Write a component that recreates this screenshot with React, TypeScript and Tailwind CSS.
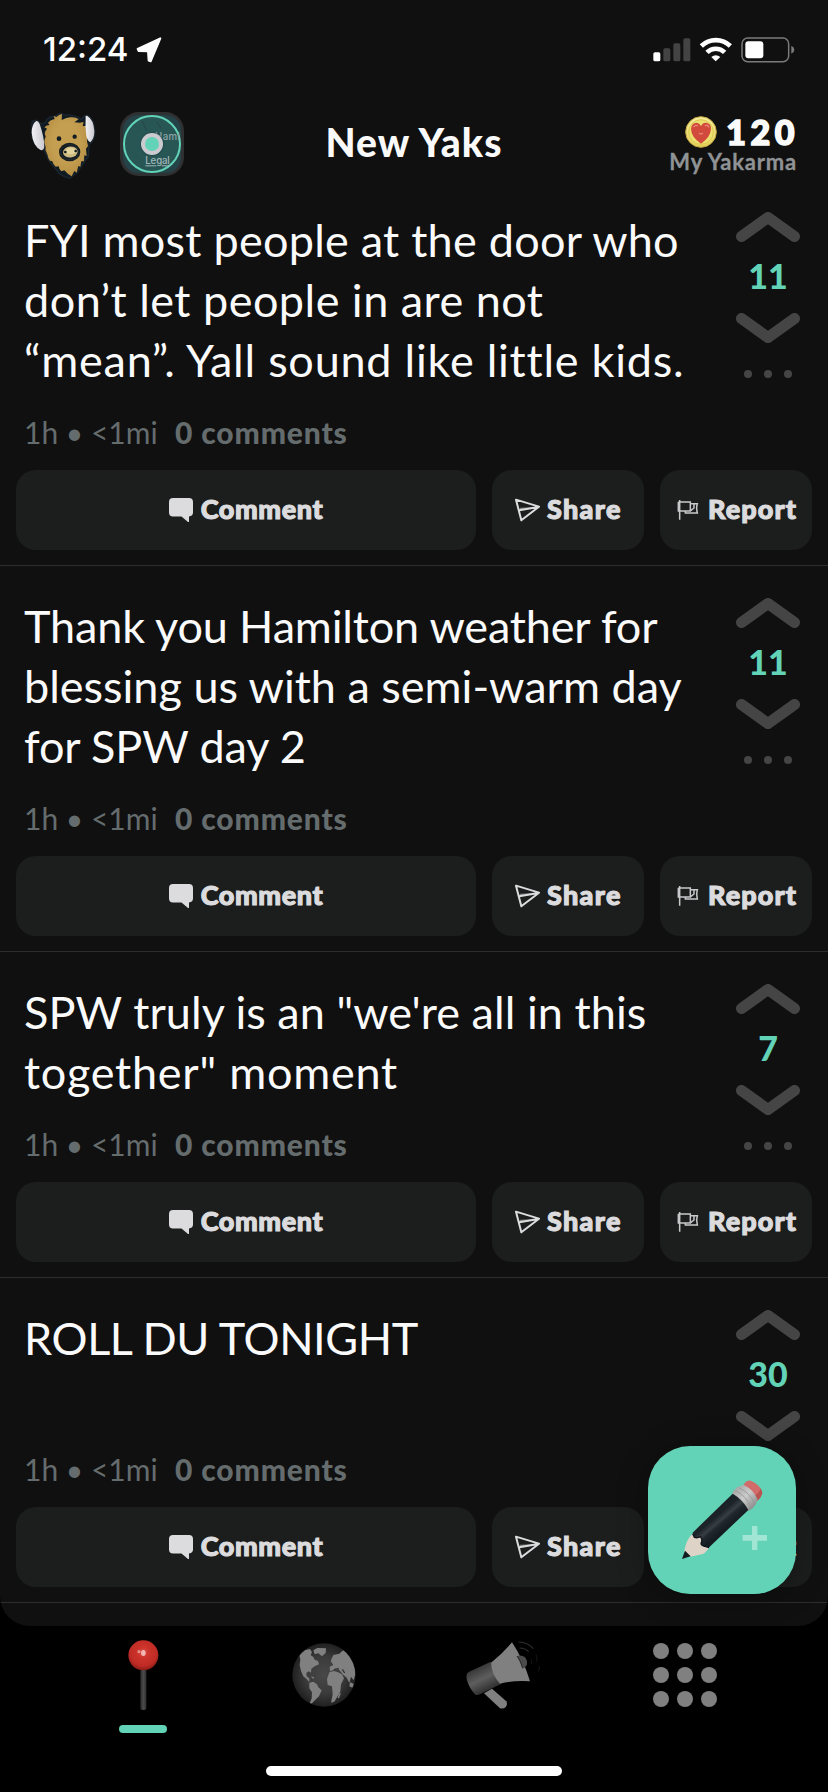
import type { ReactNode } from "react";

type Line = { text: string; tracking: string };
type Post = { lines: Line[]; votes: string };

const posts: Post[] = [
  {
    votes: "11",
    lines: [
      { text: "FYI most people at the door who", tracking: "tracking-[0.24px]" },
      { text: "don’t let people in are not", tracking: "tracking-[0.47px]" },
      { text: "“mean”. Yall sound like little kids.", tracking: "tracking-[0.76px]" },
    ],
  },
  {
    votes: "11",
    lines: [
      { text: "Thank you Hamilton weather for", tracking: "tracking-[-0.16px]" },
      { text: "blessing us with a semi-warm day", tracking: "tracking-[0px]" },
      { text: "for SPW day 2", tracking: "tracking-[-0.12px]" },
    ],
  },
  {
    votes: "7",
    lines: [
      { text: 'SPW truly is an "we\'re all in this', tracking: "tracking-[0.06px]" },
      { text: 'together" moment', tracking: "tracking-[0.75px]" },
    ],
  },
  {
    votes: "30",
    lines: [{ text: "ROLL DU TONIGHT", tracking: "tracking-[-0.38px]" }],
  },
];

function StatusBar() {
  return (
    <div className="flex h-[100px] items-start justify-between pl-[43px] pr-[33px] pt-[29px]">
      <div className="flex items-center gap-[7px]">
        <span className="font-['Inter',sans-serif] text-[33px] font-medium leading-[40px] text-white">12:24</span>
        <svg className="mt-[1px] h-[26px] w-[26px]" viewBox="0 0 78 78">
          <path d="M73 4 L5 36 L8 42 L36 43 L38 71 L44 73 Z" fill="#fff" stroke="#fff" strokeWidth="6" strokeLinejoin="round" />
        </svg>
      </div>
      <svg className="mt-[8px] h-[26px] w-[142px]" viewBox="698 110 426 78">
        <rect x="699" y="156" width="21" height="27" rx="5" fill="#fff" />
        <rect x="729" y="144" width="21" height="39" rx="5" fill="#434343" />
        <rect x="759" y="129" width="21" height="54" rx="5" fill="#434343" />
        <rect x="789" y="114" width="21" height="69" rx="5" fill="#434343" />
        <g fill="none" stroke="#fff" strokeWidth="14">
          <path d="M843 137 A62 62 0 0 1 930 137" />
          <path d="M860 156 A38 38 0 0 1 913 156" />
        </g>
        <path d="M873 170 Q886 159 900 170 L886 183 Z" fill="#fff" />
        <rect x="965" y="113" width="140" height="71" rx="17" fill="none" stroke="#7b7b7b" strokeWidth="4.5" />
        <rect x="975" y="123" width="54" height="51" rx="9" fill="#fff" />
        <path d="M1113 136 Q1122 140 1122 148 Q1122 156 1113 160 Z" fill="#7b7b7b" />
      </svg>
    </div>
  );
}

function YakLogo() {
  return (
    <svg className="h-[68px] w-[66px]" viewBox="89 336 198 204">
      <defs>
        <linearGradient id="horn" x1="0" x2="1">
          <stop offset="0" stopColor="#f2f1f5" />
          <stop offset="1" stopColor="#c9c8ce" />
        </linearGradient>
        <radialGradient id="fur" cx="0.5" cy="0.45" r="0.6">
          <stop offset="0.5" stopColor="#c59f51" />
          <stop offset="1" stopColor="#b48d42" />
        </radialGradient>
      </defs>
      <path d="M95 366 Q108 352 122 372 L136 366 Q140 350 166 348 Q180 334 192 345 Q222 342 243 358 Q253 340 268 350 Q284 368 283 405 Q280 425 266 433 L264 470 L246 494 L232 516 L209 535 Q190 532 178 522 L146 482 L132 452 Q104 444 95 410 Z" fill="#101a22" stroke="#1b2630" strokeWidth="4" strokeLinejoin="round" />
      <path d="M185 342 Q176 343 168 351 L160 348 L163 357 Q148 360 143 369 L148 375 Q139 375 132 382 L140 386 Q131 396 134 404 L136 410 Q129 424 134 434 L136 442 Q133 450 139 458 L142 466 Q142 474 149 482 L156 484 Q158 494 166 500 L175 499 Q176 508 183 514 L192 511 Q201 522 214 529 L222 513 L229 518 L234 498 L240 500 L243 484 L251 484 L252 466 L259 468 L257 446 L263 438 L260 424 L263 402 L256 386 L258 378 L247 378 L250 366 L238 368 L222 367 L235 358 Q226 350 210 352 L198 354 L184 360 Z" fill="url(#fur)" />
      <path d="M108 363 Q94 372 94 398 Q97 437 122 451 Q131 450 132 440 Q132 412 118 372 Q114 362 108 363Z" fill="url(#horn)" />
      <path d="M256 348 Q254 382 258 408 Q262 424 270 427 Q282 416 282 394 Q280 358 260 347Z" fill="url(#horn)" />
      <circle cx="176" cy="416" r="7" fill="#131d22" />
      <circle cx="223" cy="410" r="6.5" fill="#131d22" />
      <ellipse cx="208" cy="456" rx="32" ry="28" fill="#131b20" />
      <ellipse cx="208" cy="456" rx="27" ry="23" fill="none" stroke="#28323a" strokeWidth="2" />
      <ellipse cx="210" cy="456" rx="22" ry="16.5" fill="#cdbb82" transform="rotate(-7 210 456)" />
      <ellipse cx="211" cy="453" rx="15" ry="10" fill="#e2d39c" />
      <circle cx="195" cy="456" r="4" fill="#131b20" />
      <circle cx="226" cy="453" r="4" fill="#131b20" />
    </svg>
  );
}

function MapBadge() {
  return (
    <svg className="h-[64px] w-[64px]" viewBox="360 336 192 192">
      <rect x="360" y="336" width="192" height="192" rx="56" fill="#2f3031" />
      <rect x="369" y="345" width="174" height="174" rx="47" fill="#244349" />
      <circle cx="456" cy="432" r="84" fill="#285655" stroke="#62d3b6" strokeWidth="6" />
      <path d="M426 362 L440 392 M470 366 L484 386" stroke="#27454c" strokeWidth="3" />
      <text x="465" y="421" fill="#8fa6a8" fontSize="29" fontFamily="Inter, sans-serif" fontWeight="500" textLength="75">Hami</text>
      <circle cx="456" cy="432" r="37" fill="#1f4548" opacity="0.5" />
      <circle cx="456" cy="432" r="33" fill="#cacad0" />
      <circle cx="456" cy="432" r="21" fill="#62d3b6" />
      <text x="436" y="493" fill="#a3b8b9" fontSize="29" fontFamily="Inter, sans-serif" fontWeight="500" textLength="73" textDecoration="underline">Legal</text>
    </svg>
  );
}

function HeartCoin() {
  return (
    <svg className="h-[32px] w-[32px]" viewBox="0 0 96 96">
      <defs>
        <linearGradient id="coin" x1="0" y1="0" x2="0" y2="1">
          <stop offset="0" stopColor="#f6eea0" />
          <stop offset="1" stopColor="#e3cf57" />
        </linearGradient>
      </defs>
      <circle cx="48" cy="48" r="46" fill="url(#coin)" stroke="#c3a640" strokeWidth="3" />
      <circle cx="48" cy="48" r="37" fill="#ebe070" stroke="#dac84f" strokeWidth="3" />
      <path d="M48 83 Q18 62 18 38 Q20 20 35 20 Q44 21 48 30 Q53 19 64 20 Q78 22 78 38 Q77 62 48 83Z" fill="#d14a3c" />
      <path d="M27 32 Q31 26 37 29 M61 29 Q68 25 71 33 M43 52 Q48 56 53 52" stroke="#eb8779" strokeWidth="4" strokeLinecap="round" fill="none" />
    </svg>
  );
}

function Header() {
  return (
    <header className="grid h-[80px] grid-cols-[1fr_auto_1fr] items-start pl-[30px] pr-[32px]">
      <div className="flex gap-[24px] pt-[12px]">
        <YakLogo />
        <MapBadge />
      </div>
      <h1 className="ml-[2px] pt-[18px] text-[39px] font-black leading-[48px] tracking-[1.1px] text-[#fafafa]">New Yaks</h1>
      <div className="flex flex-col items-end pt-[16px]">
        <div className="flex items-center gap-[9px]">
          <HeartCoin />
          <span className="mr-[-3px] text-[34px] font-black leading-[30px] tracking-[4.5px] text-[#fafafa] [-webkit-text-stroke:1.6px_#fafafa]">120</span>
        </div>
        <span className="mr-[-1px] mt-[1px] text-[22px] font-bold leading-[25px] tracking-[0.8px] text-[#8f9395] [-webkit-text-stroke:0.3px_#8f9395]">My Yakarma</span>
      </div>
    </header>
  );
}

function Chevron({ down = false }: { down?: boolean }) {
  return (
    <svg className="h-[30px] w-[64px]" viewBox="0 0 64 30">
      <path d={down ? "M5.5 5.5 L32 24.5 L58.5 5.5" : "M5.5 24.5 L32 5.5 L58.5 24.5"} fill="none" stroke="#454545" strokeWidth="11" strokeLinecap="round" strokeLinejoin="round" />
    </svg>
  );
}

function Votes({ value }: { value: string }) {
  return (
    <div className="flex w-[64px] flex-col items-center">
      <Chevron />
      <span className="mt-[14px] h-[42px] text-[34px] font-black leading-[40px] text-[#62d3b6]">{value}</span>
      <div className="mt-[15px] flex">
        <Chevron down />
      </div>
      <div className="mt-[27px] flex gap-[12px]">
        <i className="h-2 w-2 rounded-full bg-[#454545]" />
        <i className="h-2 w-2 rounded-full bg-[#454545]" />
        <i className="h-2 w-2 rounded-full bg-[#454545]" />
      </div>
    </div>
  );
}

function Action({ icon, label, className }: { icon: ReactNode; label: string; className: string }) {
  return (
    <button className={`flex h-[80px] items-center rounded-[20px] bg-[#1c1e1d] text-[27px] font-black leading-[40px] text-[#dcdcde] [-webkit-text-stroke:1.1px_#dcdcde] ${className}`}>
      {icon}
      <span className="pb-[2px]">{label}</span>
    </button>
  );
}

const commentIcon = (
  <svg className="mr-[8px] h-[24px] w-[24px]" viewBox="0 0 24 24">
    <path d="M4 0H20Q24 0 24 4V14.5Q24 18 20 18.5V24H19L12.5 18.5H4Q0 18.5 0 14.5V4Q0 0 4 0Z" fill="#dcdcde" />
  </svg>
);
const shareIcon = (
  <svg className="mr-[7px] h-[24px] w-[25px]" viewBox="0 0 75 72">
    <path d="M3 5 L72 26 L19 67 Z M13 37 L70 27" fill="none" stroke="#dcdcde" strokeWidth="6" strokeLinejoin="round" />
    <path d="M13 37 L70 27 L15 29 Z" fill="#dcdcde" opacity="0.5" />
  </svg>
);
const reportIcon = (
  <svg className="mr-[9px] h-[22px] w-[22px]" viewBox="0 0 66 66">
    <path d="M8 3 V62 M4 9 H40 V36 H4 V9 M40 14 H61 Q57 26 61 42 H25 V37 M40 36 L51 27 V16" fill="none" stroke="#c9c9cb" strokeWidth="4.5" />
  </svg>
);

function PostCard({ post }: { post: Post }) {
  return (
    <article className="border-b border-[#2d2d2e]">
      <div className="flex min-h-[165px] items-start justify-between pl-[24px] pr-[28px] pt-[30px]">
        <p className="pb-[16px] text-[45px] leading-[60px] text-[#fafafa]">
          {post.lines.map((l) => (
            <span key={l.text} className={`block whitespace-nowrap ${l.tracking}`}>{l.text}</span>
          ))}
        </p>
        <div className="mt-[2px] h-[100px]">
          <Votes value={post.votes} />
        </div>
      </div>
      <div className="flex h-[52px] items-center pl-[24px] text-[30px] leading-[40px] text-[#656c6d]">
        <span className="w-[151px] whitespace-pre">1h • &lt;1mi</span>
        <span className="font-black tracking-[0.85px]">0 comments</span>
      </div>
      <div className="mt-[12px] flex gap-4 px-4 pb-[15px]">
        <Action icon={commentIcon} label="Comment" className="w-[460px] justify-center tracking-[0.6px]" />
        <Action icon={shareIcon} label="Share" className="w-[152px] pl-[23px] tracking-[1.3px]" />
        <Action icon={reportIcon} label="Report" className="w-[152px] pl-[17px] tracking-[1.1px]" />
      </div>
    </article>
  );
}

function ComposeButton() {
  return (
    <button className="absolute left-[648px] top-[1446px] h-[148px] w-[148px] overflow-hidden rounded-[42px] bg-[#62d3b6] shadow-[0_4px_28px_6px_rgba(0,0,0,0.2)]">
      <svg className="h-full w-full" viewBox="54 48 444 444">
        <defs>
          <linearGradient id="barrel" gradientUnits="userSpaceOnUse" x1="247" y1="250" x2="288" y2="298">
            <stop offset="0" stopColor="#1a2127" />
            <stop offset="0.25" stopColor="#1c242a" />
            <stop offset="0.5" stopColor="#383f43" />
            <stop offset="0.65" stopColor="#20282d" />
            <stop offset="1" stopColor="#151c21" />
          </linearGradient>
          <linearGradient id="ferrule" gradientUnits="userSpaceOnUse" x1="315" y1="178" x2="370" y2="230">
            <stop offset="0" stopColor="#a9a9aa" />
            <stop offset="0.5" stopColor="#cbcbcc" />
            <stop offset="1" stopColor="#919192" />
          </linearGradient>
        </defs>
        <path d="M340 165 Q350 150 362 152 Q390 163 397 188 Q394 203 383 212 Z" fill="#d26c6b" />
        <path d="M383 212 L374 196 Q390 190 391 174 Q397 184 397 190 Q394 203 383 212" fill="#b9534f" />
        <path d="M306 190 Q320 166 342 165 Q372 180 383 209 Q374 235 355 243 Z" fill="url(#ferrule)" />
        <path d="M316 182 Q350 198 364 234 M326 173 Q360 188 374 221" stroke="#979798" strokeWidth="2.5" fill="none" />
        <path d="M308 191 L188 308 L193 330 L214 350 L236 353 L355 240 Q338 208 308 191Z" fill="url(#barrel)" />
        <path d="M188 311 L193 322 Q202 325 212 320 L216 330 L213 342 Q217 350 225 349 L237 353 Q226 370 216 373 L181 380 L163 364 Q168 328 188 311Z" fill="#ddd4c7" />
        <path d="M188 311 L193 322 Q202 325 212 320 L216 330 L213 342 Q217 350 225 349 L237 353" fill="none" stroke="#0f151a" strokeWidth="4" />
        <path d="M165 362 L156 387 L182 379 Z" fill="#131a20" />
        <path d="M366 288h16v27h29v17h-29v28h-16v-28h-28v-17h28z" fill="#a1e6d4" />
      </svg>
    </button>
  );
}

function TabBar() {
  return (
    <nav className="flex h-[166px] flex-col items-center bg-black">
      <div className="grid h-[140px] w-full grid-cols-4 justify-items-center px-[53px] pt-[13px]">
        <div className="flex flex-col items-center">
          <svg className="h-[72px] w-[34px]" viewBox="380 117 102 216">
            <defs>
              <radialGradient id="pin" cx="0.5" cy="0.4" r="0.6">
                <stop offset="0" stopColor="#df514b" />
                <stop offset="0.3" stopColor="#cc332b" />
                <stop offset="0.75" stopColor="#bf2c25" />
                <stop offset="1" stopColor="#8b1b17" />
              </radialGradient>
              <linearGradient id="stem" x1="0" x2="1">
                <stop offset="0" stopColor="#292929" />
                <stop offset="0.5" stopColor="#4b4b4b" />
                <stop offset="1" stopColor="#303030" />
              </linearGradient>
            </defs>
            <rect x="423" y="200" width="18" height="130" rx="6" fill="url(#stem)" />
            <circle cx="432" cy="166" r="45" fill="url(#pin)" />
            <ellipse cx="432" cy="159" rx="7" ry="9" fill="#f2b6b3" />
            <circle cx="419" cy="155" r="5" fill="#e58e89" />
          </svg>
          <i className="mt-[14px] h-[8px] w-[48px] rounded-full bg-[#62d3b6]" />
        </div>
        <svg className="mt-[4px] h-[64px] w-[64px]" viewBox="876 128 192 192">
          <defs>
            <radialGradient id="ocean">
              <stop offset="0" stopColor="#484848" />
              <stop offset="0.6" stopColor="#3a3a3a" />
              <stop offset="1" stopColor="#202020" />
            </radialGradient>
            <clipPath id="sphere"><circle cx="972" cy="224" r="94" /></clipPath>
          </defs>
          <circle cx="972" cy="224" r="95" fill="url(#ocean)" />
          <g fill="#808080" clipPath="url(#sphere)">
            <path d="M898 164 L914 150 L930 146 L936 156 L932 164 L940 170 L944 178 L954 182 L957 192 L944 198 L934 205 L933 217 L926 213 L919 218 L920 228 L928 234 L928 246 L920 236 L910 228 L903 212 L899 194 L901 178 Z" />
            <path d="M940 150 L952 143 L978 144 L977 158 L966 168 L955 159 L944 162 Z" />
            <path d="M928 247 L940 244 L951 252 L955 261 L965 270 L957 288 L946 298 L936 309 L928 312 L935 294 L936 276 L928 264 Z" />
            <path d="M1000 164 L1018 160 L1030 149 L1050 162 L1063 190 L1067 218 L1061 240 L1053 229 L1048 248 L1040 232 L1028 222 L1016 207 L1002 208 L990 213 L989 199 L1000 194 L992 182 Z" />
            <path d="M988 216 L1002 212 L1014 216 L1026 222 L1032 234 L1023 252 L1021 274 L1011 291 L1003 304 L993 307 L998 282 L996 258 L983 254 L981 236 Z" />
            <path d="M1017 280 L1023 278 L1017 294 L1013 292 Z M1050 246 L1062 251 L1057 262 L1048 258 Z M1046 286 L1058 266 L1057 280 Z M932 228 L943 231 L940 236 Z" />
          </g>
          <path d="M1002 208 L1016 204 M1027 207 L1034 218" stroke="#343434" strokeWidth="4" fill="none" />
        </svg>
        <svg className="mt-px h-[70px] w-[76px]" viewBox="138 122 228 210">
          <defs>
            <linearGradient id="horn-body" gradientUnits="userSpaceOnUse" x1="172" y1="206" x2="208" y2="278">
              <stop offset="0" stopColor="#393939" />
              <stop offset="0.45" stopColor="#5e5e5e" />
              <stop offset="1" stopColor="#282828" />
            </linearGradient>
          </defs>
          <path d="M192 282 L216 268 L259 306 Q264 314 258 322 Q250 330 240 327 Z" fill="#808080" />
          <path d="M212 187 L146 218 Q136 222 141 243 Q148 268 166 286 Q171 289 180 285 L243 254 Z" fill="url(#horn-body)" />
          <path d="M213 190 Q250 160 276 129 Q310 180 330 246 Q278 243 240 253 Q214 224 213 190Z" fill="#808080" />
          <path d="M291 170 Q305 166 315 174 Q325 188 319 199 Q313 207 308 207 Z" fill="#4b4b4b" />
          <path d="M291 170 Q303 184 308 207" stroke="#292929" strokeWidth="3" fill="none" />
          <path d="M296 128 Q324 129 340 148 M299 146 Q315 146 326 157" fill="none" stroke="#303030" strokeWidth="3.5" />
          <path d="M348 165 Q353 176 350 187 M334 180 Q337 188 334 194 M359 200 L356 216" fill="none" stroke="#161616" strokeWidth="3" />
        </svg>
        <div className="mt-[4px] grid h-[64px] grid-cols-3 gap-2">
          {Array.from({ length: 9 }, (_, i) => (
            <i key={i} className="h-4 w-4 rounded-full bg-[#808080]" />
          ))}
        </div>
      </div>
      <div className="h-[10px] w-[296px] rounded-full bg-white" />
    </nav>
  );
}

export default function App() {
  return (
    <div className="relative h-[1792px] w-[828px] overflow-hidden bg-black font-['Lato','Liberation_Sans',sans-serif]">
      <main className="h-[1626px] overflow-hidden rounded-b-[30px] bg-[#101010]">
        <StatusBar />
        <Header />
        {posts.map((p, i) => (
          <PostCard key={i} post={p} />
        ))}
      </main>
      <ComposeButton />
      <TabBar />
    </div>
  );
}
